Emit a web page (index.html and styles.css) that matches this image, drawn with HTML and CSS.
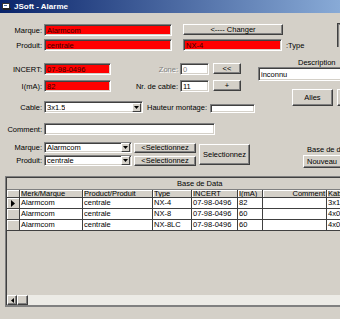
FILE: index.html
```html
<!DOCTYPE html>
<html>
<head>
<meta charset="utf-8">
<link rel="stylesheet" href="styles.css">
</head>
<body>
<div class="window">
  <div class="titlebar">
    <svg class="ticon" width="9" height="8" viewBox="0 0 9 8"><rect x="0.5" y="0.5" width="7" height="5" fill="#fff" stroke="#333"/><rect x="1" y="5" width="8" height="2" fill="#222"/><rect x="2" y="2" width="3" height="1" fill="#4a6ea9"/></svg>
    <span class="title">JSoft - Alarme</span>
  </div>

  <div class="sec top">
    <div class="col topcol">
      <div class="row rA">
        <span class="lbl">Marque:</span>
        <div class="tb red w128">Alarmcom</div>
        <div class="btn chg">&lt;---- Changer</div>
      </div>
      <div class="row rB">
        <span class="lbl">Produit:</span>
        <div class="tb red w128">centrale</div>
        <div class="tb red typebox">NX-4</div>
        <span class="typelbl">:Type</span>
      </div>
    </div>
    <div class="edgebox"></div>
  </div>

  <div class="sec mid">
    <div class="col leftcol">
      <div class="row rC">
        <span class="lbl">INCERT:</span>
        <div class="tb red w67">07-98-0496</div>
        <span class="mlbl dis">Zone:</span>
        <div class="tb small distext">0</div>
        <div class="btn sbtn">&lt;&lt;</div>
      </div>
      <div class="row rD">
        <span class="lbl">I(mA):</span>
        <div class="tb red w67">82</div>
        <span class="mlbl">Nr. de cable:</span>
        <div class="tb small">11</div>
        <div class="btn sbtn">+</div>
      </div>
      <div class="row rE">
        <span class="lbl">Cable:</span>
        <div class="tb combo w99"><span class="ctext">3x1.5</span><span class="dd"><svg width="5" height="3" viewBox="0 0 5 3"><path d="M0 0H5L2.5 3Z" fill="#000"/></svg></span></div>
        <span class="hlbl">Hauteur montage:</span>
        <div class="tb hbox"></div>
      </div>
    </div>
    <div class="col rightcol">
      <span class="desclbl">Description</span>
      <div class="tb desc">inconnu</div>
      <div class="row brow">
        <div class="btn alles">Alles</div>
        <div class="btn edgebtn"></div>
      </div>
    </div>
  </div>

  <div class="row rComment">
    <span class="lbl">Comment:</span>
    <div class="tb comment"></div>
  </div>

  <div class="sec sel">
    <div class="col selcol">
      <div class="row rS">
        <span class="lbl">Marque:</span>
        <div class="tb combo w88"><span class="ctext">Alarmcom</span><span class="dd"><svg width="5" height="3" viewBox="0 0 5 3"><path d="M0 0H5L2.5 3Z" fill="#000"/></svg></span></div>
        <div class="btn selbtn">&lt;Selectionnez</div>
      </div>
      <div class="row rS">
        <span class="lbl">Produit:</span>
        <div class="tb combo w88"><span class="ctext">centrale</span><span class="dd"><svg width="5" height="3" viewBox="0 0 5 3"><path d="M0 0H5L2.5 3Z" fill="#000"/></svg></span></div>
        <div class="btn selbtn">&lt;Selectionnez</div>
      </div>
    </div>
    <div class="btn bigbtn">Selectionnez</div>
    <div class="col dbcol">
      <span class="dblbl">Base de données</span>
      <div class="btn nouveau">Nouveau</div>
    </div>
  </div>

  <div class="grid">
    <div class="caption">Base de Data</div>
    <table class="dg">
      <colgroup>
        <col class="c-ind"><col class="c-mar"><col class="c-pro"><col class="c-typ"><col class="c-inc"><col class="c-ima"><col class="c-com"><col class="c-kab">
      </colgroup>
      <thead>
        <tr>
          <th class="ind"></th><th>Merk/Marque</th><th>Product/Produit</th><th>Type</th><th>INCERT</th><th>I(mA)</th><th class="right">Comment</th><th>Kabel</th>
        </tr>
      </thead>
      <tbody>
        <tr>
          <td class="ind"><svg width="4" height="7" viewBox="0 0 4 7"><path d="M0 0L4 3.5L0 7Z" fill="#000"/></svg></td><td>Alarmcom</td><td>centrale</td><td>NX-4</td><td>07-98-0496</td><td>82</td><td></td><td>3x1.5</td>
        </tr>
        <tr>
          <td class="ind"></td><td>Alarmcom</td><td>centrale</td><td>NX-8</td><td>07-98-0496</td><td>60</td><td></td><td>4x0.22</td>
        </tr>
        <tr>
          <td class="ind"></td><td>Alarmcom</td><td>centrale</td><td>NX-8LC</td><td>07-98-0496</td><td>60</td><td></td><td>4x0.22</td>
        </tr>
      </tbody>
    </table>
    <div class="filler"></div>
    <div class="hscroll">
      <div class="sbarrow"><svg width="3" height="5" viewBox="0 0 3 5"><path d="M3 0V5L0 2.5Z" fill="#000"/></svg></div>
      <div class="sbthumb"></div>
      <div class="sbtrack"></div>
    </div>
  </div>
</div>
</body>
</html>
```

FILE: styles.css
```css
html, body {
  margin: 0;
  padding: 0;
  overflow: hidden;
  background: #d4d0c8;
}
body {
  width: 340px;
  height: 319px;
  font-family: "Liberation Sans", Arial, sans-serif;
  font-size: 7.5px;
  color: #000;
}
.window {
  width: 420px;
}
.titlebar {
  height: 13px;
  background: linear-gradient(to right, #0a246a, #a6caf0);
  display: flex;
  align-items: center;
  color: #fff;
  font-weight: bold;
  font-size: 8px;
}
.ticon {
  margin-left: 2px;
  margin-right: 3px;
  flex: none;
}
.sec {
  display: flex;
}
.col {
  display: flex;
  flex-direction: column;
}
.row {
  display: flex;
  align-items: center;
}
.lbl {
  width: 42px;
  text-align: right;
  flex: none;
  margin-right: 2px;
  white-space: nowrap;
}
.tb {
  box-sizing: border-box;
  height: 12px;
  background: #fff;
  border: 1px solid;
  border-color: #808080 #fff #fff #808080;
  box-shadow: inset 1px 1px #404040, inset -1px -1px #d4d0c8;
  padding: 0 2px;
  display: flex;
  align-items: center;
  white-space: nowrap;
  overflow: hidden;
  flex: none;
}
.red {
  background: #ff0000;
  color: #3a0000;
}
.btn {
  box-sizing: border-box;
  background: #d4d0c8;
  border: 1px solid;
  border-color: #fff #404040 #404040 #fff;
  box-shadow: inset -1px -1px #808080;
  display: flex;
  align-items: center;
  justify-content: center;
  white-space: nowrap;
  overflow: hidden;
  flex: none;
}

/* top section */
.top {
  padding-top: 11px;
}
.topcol {
  width: 337px;
  gap: 3px;
}
.rA, .rB {
  height: 12px;
}
.w128 { width: 128px; }
.chg {
  width: 100px;
  height: 11px;
  margin-left: 11px;
  align-self: flex-start;
}
.typebox {
  width: 99px;
  margin-left: 11px;
}
.typelbl {
  margin-left: 4px;
}
.edgebox {
  box-sizing: border-box;
  width: 30px;
  height: 24px;
  margin-top: -1px;
  border-left: 1px solid #404040;
  border-top: 1px solid #404040;
  box-shadow: inset 1px 1px #808080;
}

/* middle section */
.mid {
  margin-top: 7px;
}
.leftcol {
  width: 258px;
  padding-top: 5px;
}
.rC, .rD {
  height: 12px;
}
.rD {
  margin-top: 5px;
}
.rE {
  height: 12px;
  margin-top: 9px;
}
.w67 { width: 67px; }
.mlbl {
  width: 69px;
  margin-left: -2px;
  text-align: right;
  flex: none;
  white-space: nowrap;
}
.dis {
  color: #808080;
  text-shadow: 1px 1px #fff;
}
.small {
  width: 29px;
  margin-left: 2px;
}
.distext {
  color: #808080;
}
.sbtn {
  width: 28px;
  height: 11px;
  margin-left: 4px;
  align-self: flex-start;
}
.combo {
  padding: 0 1px 0 2px;
  justify-content: space-between;
}
.ctext {
  overflow: hidden;
}
.dd {
  box-sizing: border-box;
  width: 9px;
  height: 9px;
  background: #d4d0c8;
  border: 1px solid;
  border-color: #fff #404040 #404040 #fff;
  display: flex;
  align-items: center;
  justify-content: center;
  flex: none;
}
.w99 { width: 99px; }
.w88 { width: 88px; }
.hlbl {
  width: 63px;
  margin-left: 4px;
  flex: none;
  white-space: nowrap;
}
.hbox {
  width: 45px;
  height: 9px;
  align-self: flex-end;
}
.rightcol {
  width: 160px;
}
.desclbl {
  height: 9px;
  line-height: 9px;
  margin-left: 40px;
}
.desc {
  width: 150px;
  height: 14px;
}
.brow {
  margin-top: 8px;
}
.alles {
  width: 41px;
  height: 17px;
  margin-left: 34px;
}
.edgebtn {
  width: 30px;
  height: 17px;
  margin-left: 4px;
}

/* comment */
.rComment {
  height: 12px;
  margin-top: 10px;
}
.comment {
  width: 171px;
}

/* selection section */
.sel {
  margin-top: 7px;
}
.selcol {
  gap: 2px;
}
.rS {
  height: 11px;
}
.rS .tb {
  height: 11px;
}
.selbtn {
  width: 62px;
  height: 10px;
  margin-left: 2px;
}
.bigbtn {
  width: 51px;
  height: 21px;
  margin-left: 3px;
  margin-top: 2px;
}
.dbcol {
  margin-left: 53px;
}
.dblbl {
  height: 9px;
  line-height: 9px;
  margin-top: 3px;
  padding-left: 4px;
  white-space: nowrap;
}
.nouveau {
  width: 60px;
  height: 13px;
  margin-top: 1px;
  justify-content: flex-start;
  padding-left: 3px;
}

/* grid */
.grid {
  box-sizing: border-box;
  margin-top: 8px;
  margin-left: 5px;
  height: 131px;
  border-top: 1px solid #808080;
  border-left: 1px solid #808080;
  border-bottom: 2px solid #808080;
  box-shadow: inset 1px 1px #404040;
  padding: 1px 0 0 1px;
  display: flex;
  flex-direction: column;
}
.caption {
  box-sizing: border-box;
  height: 12px;
  line-height: 11px;
  padding-left: 170px;
  border-bottom: 1px solid #808080;
  white-space: nowrap;
  flex: none;
}
.dg {
  border-collapse: separate;
  border-spacing: 0;
  table-layout: fixed;
  width: 390px;
  flex: none;
}
.c-ind { width: 13px; }
.c-mar { width: 63px; }
.c-pro { width: 70px; }
.c-typ { width: 39px; }
.c-inc { width: 46px; }
.c-ima { width: 25px; }
.c-com { width: 64px; }
.c-kab { width: 70px; }
.dg th, .dg td {
  box-sizing: border-box;
  padding: 0 0 0 1px;
  font-weight: normal;
  text-align: left;
  white-space: nowrap;
  overflow: hidden;
  border-right: 1px solid #404040;
  border-bottom: 1px solid #404040;
}
.dg th {
  height: 8px;
  line-height: 7px;
  background: #d4d0c8;
  box-shadow: inset 1px 1px #fff;
}
.dg td {
  height: 11px;
  line-height: 10px;
  background: #fff;
}
.dg .ind {
  background: #d4d0c8;
  box-shadow: inset 1px 1px #fff;
  padding: 0;
  text-align: center;
}
.dg td.ind svg {
  display: block;
  margin: 1px 0 0 4px;
}
.dg th.right {
  text-align: right;
  padding-right: 1px;
}
.filler {
  flex: 1;
}
.hscroll {
  height: 10px;
  display: flex;
  flex: none;
}
.sbarrow, .sbthumb {
  box-sizing: border-box;
  height: 10px;
  background: #d4d0c8;
  border: 1px solid;
  border-color: #fff #404040 #404040 #fff;
  box-shadow: inset -1px -1px #808080;
  flex: none;
}
.sbarrow {
  width: 10px;
  display: flex;
  align-items: center;
  justify-content: center;
}
.sbthumb {
  width: 11px;
}
.sbtrack {
  flex: 1;
  background: #ecebe6;
}
```
